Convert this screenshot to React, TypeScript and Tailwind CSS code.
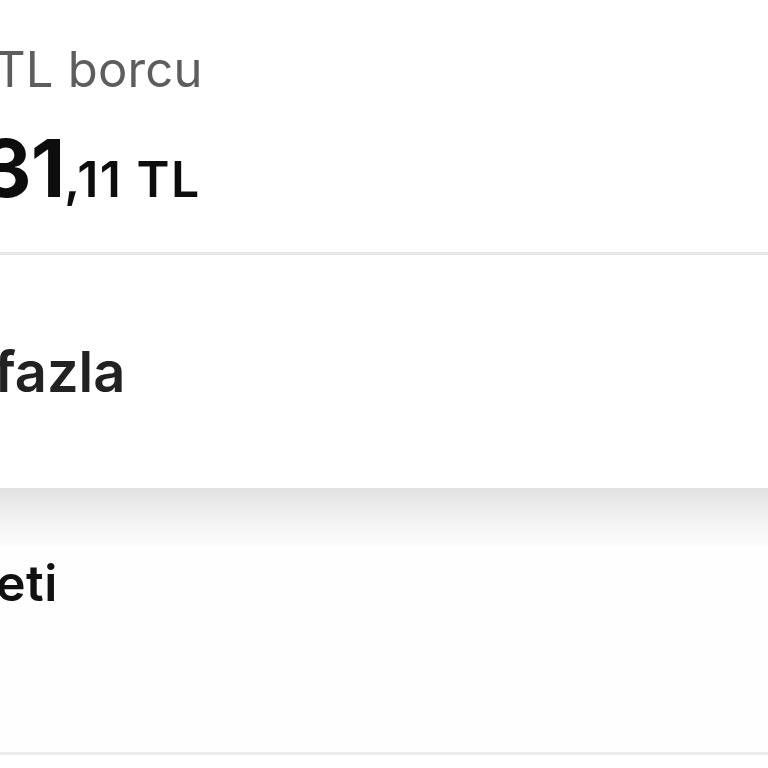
export default function App() {
  return (
    <div className="w-[768px] h-[768px] overflow-hidden bg-white font-['Inter',sans-serif]">
      <section className="h-[252px] flex flex-col">
        <div className="mt-[40px] -ml-[6px] text-[49px] leading-[60px] text-[#5d5d5d] tracking-[0.2px]">
          TL borcu
        </div>
        <div className="mt-[28px] -ml-[20px] flex items-baseline text-[#0d0d0d] font-bold">
          <span className="text-[80px] leading-[80px] tracking-[-1px]">31</span>
          <span className="text-[50px] leading-[48px] font-semibold tracking-[1.5px]">,11 TL</span>
        </div>
      </section>
      <div className="h-[3px] bg-[#e7e7e7]" />
      <section className="h-[233px] flex items-center">
        <div className="-ml-[6px] text-[56px] leading-[60px] font-semibold text-[#222]">
          fazla
        </div>
      </section>
      <div className="h-[58px] bg-gradient-to-b from-[#e2e2e2] via-[#f1f1f1] to-[#fdfdfd]" />
      <section className="h-[199px] bg-[#fefefe]">
        <div className="-ml-[4px] mt-[7px] text-[50px] leading-[60px] font-semibold text-[#111] tracking-[0.5px]">
          eti
        </div>
      </section>
      <div className="h-[3px] bg-[#ebebeb]" />
    </div>
  )
}
